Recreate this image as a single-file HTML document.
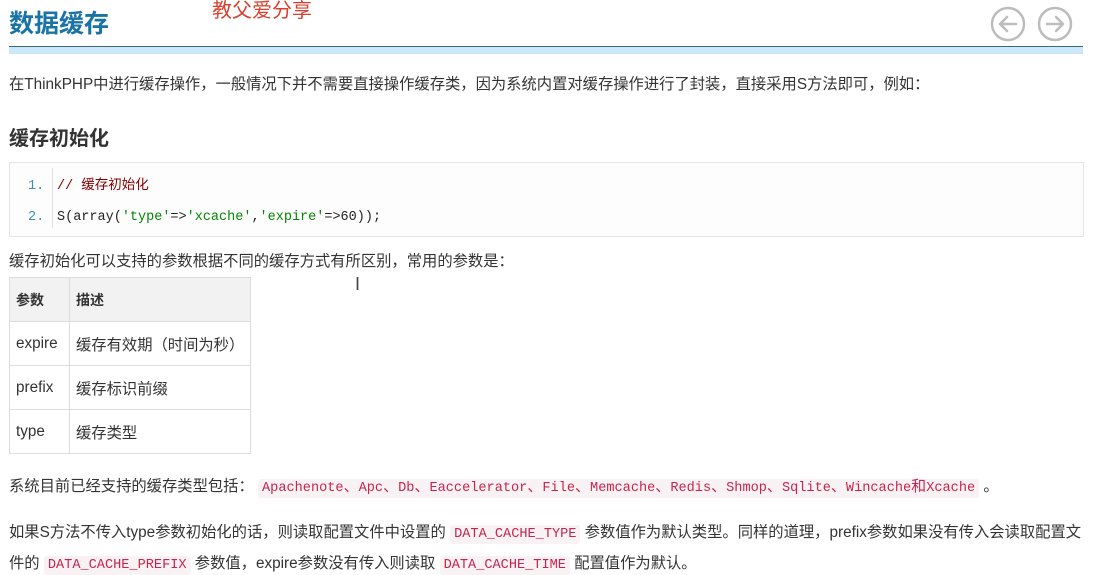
<!DOCTYPE html>
<html><head><meta charset="utf-8"><style>
body{margin:0;width:1098px;height:575px;background:#fff;position:relative;overflow:hidden;font-family:"Liberation Sans","Noto Sans CJK SC",sans-serif;color:#333;font-size:15.3px}
.a{position:absolute;white-space:nowrap}
code{font-family:"Liberation Mono","Noto Sans CJK SC",monospace;font-size:13.6px;color:#c7254e;background:#f9f2f4;padding:2px 4px;border-radius:3px}
code i{font-style:normal;font-size:15px}
table{border-collapse:collapse;font-size:15.3px}
td{border:1px solid #ddd;height:43px;padding:0 6px}
</style></head><body>
<div class="a" style="left:9px;top:4px;font-size:25px;font-weight:bold;color:#1a73a6">数据缓存</div>
<div class="a" style="left:212px;top:-6px;font-size:20px;color:#d9402e">教父爱分享</div>
<div class="a" style="left:9px;top:46px;width:1074px;height:1px;background:#3a6b72"></div>
<div class="a" style="left:9px;top:47px;width:1074px;height:7px;background:#cde7fa"></div>
<svg class="a" style="left:990px;top:6px" width="86" height="36" viewBox="0 0 86 36">
<g fill="none" stroke="#bdbdbd" stroke-width="2.5" stroke-linecap="round" stroke-linejoin="round">
<circle cx="18" cy="18" r="16"/><path d="M26 18H10M17 11l-7 7 7 7"/>
<circle cx="65" cy="18" r="16"/><path d="M57 18h16M66 11l7 7-7 7"/></g></svg>
<div class="a" style="left:9px;top:72px">在ThinkPHP中进行缓存操作，一般情况下并不需要直接操作缓存类，因为系统内置对缓存操作进行了封装，直接采用S方法即可，例如：</div>
<div class="a" style="left:9px;top:122px;font-size:20px;font-weight:bold;color:#333">缓存初始化</div>
<div class="a" style="left:9px;top:162px;width:1073px;height:73px;border:1px solid #e5e5e5;background:#fdfdfd"></div>
<div class="a" style="left:52px;top:168px;width:1px;height:60px;background:#e0e0e0"></div>
<div class="a" style="left:28px;top:171px;font-family:'Liberation Mono',monospace;font-size:13.5px;color:#3d8fb5;line-height:31px">1.<br>2.</div>
<div class="a" style="left:57px;top:171px;font-family:'Liberation Mono','Noto Sans CJK SC',monospace;font-size:13.5px;line-height:31px;color:#222"><span style="color:#800">// 缓存初始化</span><br>S(array(<span style="color:#080">'type'</span>=&gt;<span style="color:#080">'xcache'</span>,<span style="color:#080">'expire'</span>=&gt;60));</div>
<div class="a" style="left:9px;top:249px">缓存初始化可以支持的参数根据不同的缓存方式有所区别，常用的参数是：</div>
<div class="a" style="left:355px;top:274px;font-size:18px;color:#444">I</div>
<table class="a" style="left:9px;top:277px">
<tr style="background:#f2f2f2;font-weight:bold;font-size:14px"><td style="width:47px">参数</td><td style="width:162px">描述</td></tr>
<tr><td>expire</td><td>缓存有效期（时间为秒）</td></tr>
<tr><td>prefix</td><td>缓存标识前缀</td></tr>
<tr><td>type</td><td>缓存类型</td></tr>
</table>
<div class="a" style="left:9px;top:474px">系统目前已经支持的缓存类型包括： <code>Apachenote<i>、</i>Apc<i>、</i>Db<i>、</i>Eaccelerator<i>、</i>File<i>、</i>Memcache<i>、</i>Redis<i>、</i>Shmop<i>、</i>Sqlite<i>、</i>Wincache<i>和</i>Xcache</code> 。</div>
<div class="a" style="left:9px;top:520px">如果S方法不传入type参数初始化的话，则读取配置文件中设置的 <code>DATA_CACHE_TYPE</code> 参数值作为默认类型。同样的道理，prefix参数如果没有传入会读取配置文</div>
<div class="a" style="left:9px;top:551px">件的 <code>DATA_CACHE_PREFIX</code> 参数值，expire参数没有传入则读取 <code>DATA_CACHE_TIME</code> 配置值作为默认。</div>
</body></html>
